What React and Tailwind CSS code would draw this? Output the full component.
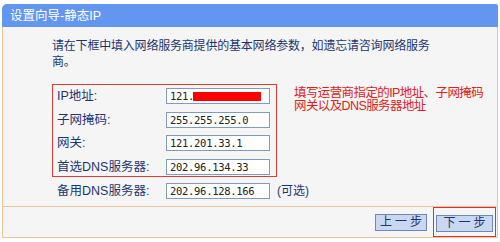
import React from "react";

const font = { fontFamily: '"Liberation Sans", "Noto Sans CJK SC", sans-serif' };

function Field({ label, value, redact }) {
  return (
    <div className="flex items-center h-[16px]">
      <div className="w-[109px] text-[12.5px] leading-[16px] text-[#1c3570]">{label}</div>
      <div className="relative w-[104px] h-[16px] border border-[#7f9db9] bg-white flex items-center pl-[3px]">
        <span className="text-[10.5px] leading-[14px] text-[#222] tracking-[-0.3px]" style={{ fontFamily: '"DejaVu Sans Mono", monospace' }}>{value}</span>
        {redact && <div className="-ml-[1px] w-[68px] h-[9px] bg-[#ff0000]" />}
      </div>
    </div>
  );
}

export default function App() {
  return (
    <div className="w-[500px] h-[242px] bg-white pt-[4px] px-[2px]" style={font}>
      <div className="h-[23px] bg-[#6396f0] rounded-tl-[5px] rounded-tr-[2px] flex items-center pl-[8px]">
        <span className="text-white text-[12.5px] leading-[16px]">设置向导-静态IP</span>
      </div>
      <div className="h-[211px] bg-[#f5f5f5] border-x border-b border-[#eac39d] flex flex-col">
        <div className="h-[185px] pl-[49px] pt-[11px]">
          <p className="w-[390px] text-[12px] leading-[16px] text-[#1c3570] tracking-[-0.2px]">
            请在下框中填入网络服务商提供的基本网络参数，如遗忘请咨询网络服务商。
          </p>
          <div className="flex mt-[14px]">
            <div className="border border-[#e03a3a] pl-[4px] pr-[6px] pt-[3px] pb-[1px] flex flex-col gap-[7.6px]">
              <Field label="IP地址:" value="121." redact />
              <Field label="子网掩码:" value="255.255.255.0" />
              <Field label="网关:" value="121.201.33.1" />
              <Field label="首选DNS服务器:" value="202.96.134.33" />
            </div>
            <div className="ml-[17px] mt-[3px] text-[12.5px] leading-[13px] text-[#e02020] tracking-[-0.6px]">
              <div>填写运营商指定的IP地址、子网掩码</div>
              <div>网关以及DNS服务器地址</div>
            </div>
          </div>
          <div className="flex items-center mt-[6px] pl-[5px]">
            <Field label="备用DNS服务器:" value="202.96.128.166" />
            <span className="ml-[7px] text-[12px] leading-[16px] text-[#1c3570]">(可选)</span>
          </div>
        </div>
        <div className="flex-1 border-t border-[#eac39d] flex items-center justify-end pr-[1px] gap-[6px]">
          <button className="w-[52px] h-[17px] bg-[#c9d8f0] border border-[#6f86b8] text-[12px] leading-[15px] text-[#1c3570] tracking-[3px] pl-[3px] whitespace-nowrap">上一步</button>
          <div className="border border-[#e03030] px-[2px] py-[2px]">
            <button className="w-[57px] h-[17px] bg-[#c9d8f0] border border-[#6f86b8] text-[12px] leading-[15px] text-[#1c3570] tracking-[3px] pl-[3px] whitespace-nowrap">下一步</button>
          </div>
        </div>
      </div>
    </div>
  );
}
